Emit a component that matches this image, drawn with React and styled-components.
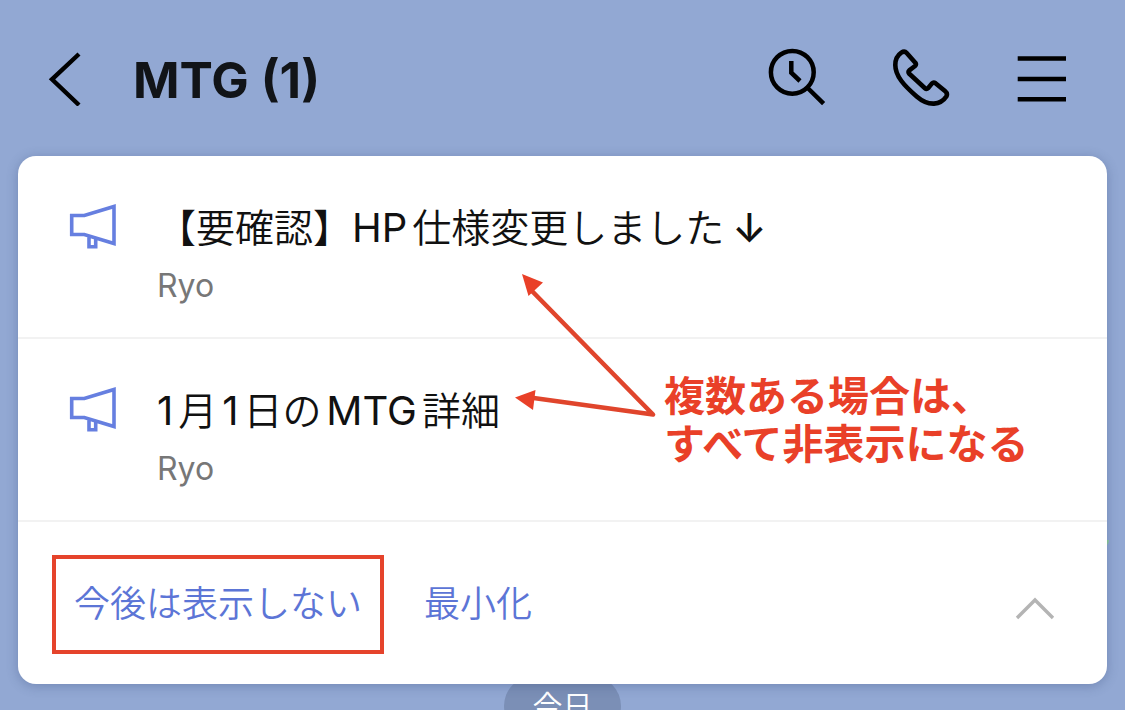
import React from 'react'
import styled, { createGlobalStyle } from 'styled-components'

const announcements = [
  { id: 1, title: '【要確認】HP仕様変更しました↓', author: 'Ryo' },
  { id: 2, title: '1月1日のMTG詳細', author: 'Ryo' },
]

// latin runs and arrows are set a bit larger than the kanji around them
const withLatin = text =>
  text
    .split(/([A-Za-z0-9]+|↓)/)
    .map((part, i) => (i % 2 ? <Latin key={i} $arrow={part === '↓'}>{part}</Latin> : part))

export default function App() {
  return (
    <Screen>
      <GlobalStyle />
      <Header>
        <IconButton type="button" aria-label="戻る">
          <BackIcon />
        </IconButton>
        <RoomName>MTG (1)</RoomName>
        <Actions>
          <IconButton type="button" aria-label="検索">
            <SearchIcon />
          </IconButton>
          <IconButton type="button" aria-label="通話">
            <PhoneIcon />
          </IconButton>
          <IconButton type="button" aria-label="メニュー">
            <MenuIcon />
          </IconButton>
        </Actions>
      </Header>

      <CardArea>
        <Sliver />
        <Card>
          <List>
            {announcements.map(item => (
              <Row key={item.id}>
                <MegaphoneIcon />
                <Title>{withLatin(item.title)}</Title>
                <Author>{item.author}</Author>
              </Row>
            ))}
          </List>
          <Footer>
            <TextButton type="button" $marked>今後は表示しない</TextButton>
            <TextButton type="button">最小化</TextButton>
            <CollapseButton type="button" aria-label="閉じる">
              <ChevronIcon />
            </CollapseButton>
          </Footer>
        </Card>
        <Arrows />
        <Note>
          複数ある場合は、
          <br />
          すべて非表示になる
        </Note>
      </CardArea>

      <DatePill>今日</DatePill>
    </Screen>
  )
}

const BackIcon = () => (
  <svg width="34" height="58" fill="none" stroke="#000" strokeWidth="4.4">
    <path d="M31 6 L4 31.3 L31 57" />
  </svg>
)

const SearchIcon = () => (
  <svg width="58" height="58" fill="none" stroke="#000" strokeWidth="4.5">
    <circle cx="24.3" cy="24.3" r="21.4" />
    <path d="M39.7 40 L55.6 55.6 M23.3 13 V24.7 L32 33" />
  </svg>
)

const PhoneIcon = () => (
  <svg width="58" height="58" fill="none" stroke="#000" strokeWidth="4.6" strokeLinejoin="round">
    <path d="M9.3 4.6 C5 7.5 3.3 11.5 3.3 17 C3.3 28 12 37.5 24.7 48.5 C31 54 37 55.8 42 55.6 C48 55.2 52 52 54.3 48.5 Q56 45.5 53 43 L43.5 35.2 Q41.5 33.8 39.8 35.6 L36 40.3 Q34.6 41.8 33 40.3 L17.3 25.8 Q15.6 24 17.3 22.4 L23 18 Q24.6 16.5 23.3 14.7 L14.7 4.9 Q12.5 2.5 9.3 4.6 Z" />
  </svg>
)

const MenuIcon = () => (
  <svg width="58" height="58" fill="none" stroke="#000" strokeWidth="4.6">
    <path d="M1.7 10.5 H50 M1.7 31 H50 M1.7 51.3 H50" />
  </svg>
)

const MegaphoneIcon = () => (
  <svg width="50" height="50" fill="none" stroke="#667fe0" strokeWidth="3.6">
    <path d="M3.7 12.5 H16.3 L46 3.5 V40.5 L16.3 31.5 H3.7 Z M21 33 V43.7 H27.7 V35" />
  </svg>
)

const ChevronIcon = () => (
  <svg width="42" height="26" fill="none" stroke="#b4b4b4" strokeWidth="3.4">
    <path d="M2 22 L20 4 L38 22" />
  </svg>
)

const Arrows = () => (
  <ArrowLayer width="150" height="160" fill="#e94028" stroke="none">
    <path d="M15 18 L138 143.5 L15 126.5" fill="none" stroke="#e0452c" strokeWidth="4.6" strokeLinejoin="round" />
    <path d="M7 3 L28 11.5 L13.5 25 Z" />
    <path d="M0 126.5 L20.5 119 L18 139 Z" />
  </ArrowLayer>
)

const GlobalStyle = createGlobalStyle`
  * {
    box-sizing: border-box;
  }

  body {
    margin: 0;
    background: #92a8d3;
    font-family: Inter, 'Noto Sans CJK JP', sans-serif;
  }

  button {
    padding: 0;
    border: 0;
    background: none;
    font: inherit;
    cursor: pointer;
  }

  svg {
    display: block;
  }
`

const Screen = styled.main`
  height: 100vh;
  overflow: hidden;
  background: #92a8d3;
`

const Header = styled.header`
  display: flex;
  align-items: center;
  padding: 48px 51px 50px 48px;
`

const IconButton = styled.button`
  flex: none;
`

const RoomName = styled.h1`
  flex: 1;
  margin: 0 0 0 51px;
  padding-top: 6px;
  color: #111418;
  font-size: 50px;
  font-weight: 700;
  line-height: 52px;
`

const Actions = styled.div`
  display: flex;
  gap: 66px;
`

const CardArea = styled.div`
  position: relative;
  z-index: 1;
  margin: 0 18px;
`

const Card = styled.section`
  position: relative;
  border-radius: 18px;
  background: #fff;
  box-shadow: 0 2px 12px rgba(40, 60, 110, .3);
`

/* edge of the message bubble that shows from behind the card */
const Sliver = styled.i`
  position: absolute;
  right: -2px;
  top: 384px;
  width: 8px;
  height: 8px;
  border-radius: 0 0 8px 0;
  background: #8fcf9a;
`

const List = styled.ul`
  margin: 0;
  padding: 0;
  list-style: none;
`

const Row = styled.li`
  display: grid;
  grid-template-columns: 50px 1fr;
  column-gap: 39px;
  align-items: center;
  padding: 43px 50px 22px;
  border-bottom: 2px solid #f2f2f2;
`

const Title = styled.div`
  color: #111;
  font-size: 39px;
  font-weight: 350;
  line-height: 58px;
  white-space: nowrap;
  text-autospace: normal;
`

const Latin = styled.span`
  margin-left: ${p => (p.$arrow ? '8px' : '0')};
  font-size: 40px;
  font-weight: ${p => (p.$arrow ? 500 : 400)};
  line-height: 1;
`

const Author = styled.div`
  grid-column: 2;
  color: #777;
  font-size: 32px;
  line-height: 58px;
`

const Footer = styled.div`
  display: flex;
  align-items: center;
  gap: 40px;
  padding: 33px 50px 30px 34px;
`

const TextButton = styled.button`
  && {
    padding: ${p => (p.$marked ? '0 18px' : '0')};
    border: ${p => (p.$marked ? '4px solid #e5432b' : '0')};
    color: #5c75d6;
    font-size: 36px;
    font-weight: 350;
    line-height: 91px;
  }
`

const CollapseButton = styled.button`
  margin: 8px 0 0 auto;
`

const ArrowLayer = styled.svg`
  position: absolute;
  left: 497px;
  top: 115px;
`

const Note = styled.p`
  position: absolute;
  left: 646px;
  top: 216px;
  margin: 0;
  color: #e94028;
  font-size: 41px;
  font-weight: 700;
  line-height: 48px;
  white-space: nowrap;
`

const DatePill = styled.div`
  width: 117px;
  margin: -8px auto 0;
  border-radius: 30px;
  background: #7b8fb6;
  color: #fff;
  font-size: 30px;
  font-weight: 350;
  line-height: 60px;
  text-align: center;
`
